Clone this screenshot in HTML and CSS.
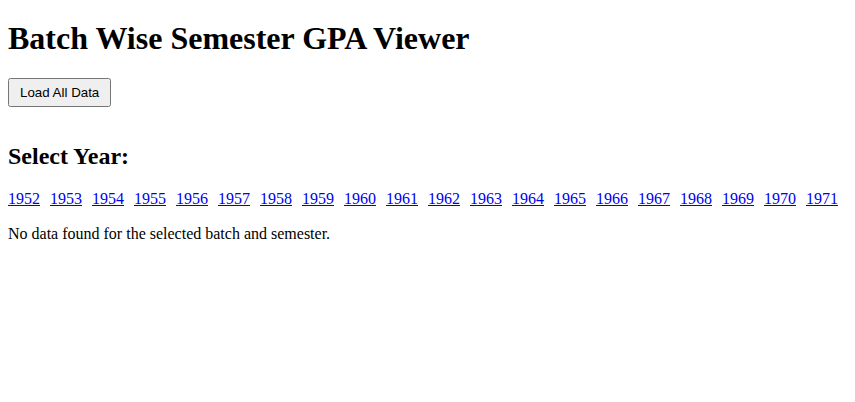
FILE: index.html
```html
<!DOCTYPE html>
<html>
<head>
<meta charset="utf-8">
<link rel="stylesheet" href="styles.css">
</head>
<body>
<h1 class="title">Batch Wise Semester GPA Viewer</h1>
<button class="load-btn">Load All Data</button>
<h2 class="year-title">Select Year:</h2>
<div class="years">
<a href="#">1952</a><a href="#">1953</a><a href="#">1954</a><a href="#">1955</a><a href="#">1956</a><a href="#">1957</a><a href="#">1958</a><a href="#">1959</a><a href="#">1960</a><a href="#">1961</a><a href="#">1962</a><a href="#">1963</a><a href="#">1964</a><a href="#">1965</a><a href="#">1966</a><a href="#">1967</a><a href="#">1968</a><a href="#">1969</a><a href="#">1970</a><a href="#">1971</a>
</div>
<p class="msg">No data found for the selected batch and semester.</p>
</body>
</html>
```
FILE: styles.css
```css
body {
  font-family: "Liberation Serif", "Times New Roman", serif;
}
.title {
  margin-top: 12px;
}
.load-btn {
  font-family: "Liberation Sans", Arial, sans-serif;
  font-size: 13.33px;
  padding: 5px 10px;
}
.year-title {
  margin-top: 36px;
}
.years {
  display: flex;
  gap: 10px;
  margin: 16px 0;
}
.years a {
  color: #0000ee;
}
.msg {
  margin-top: 17px;
}
```
